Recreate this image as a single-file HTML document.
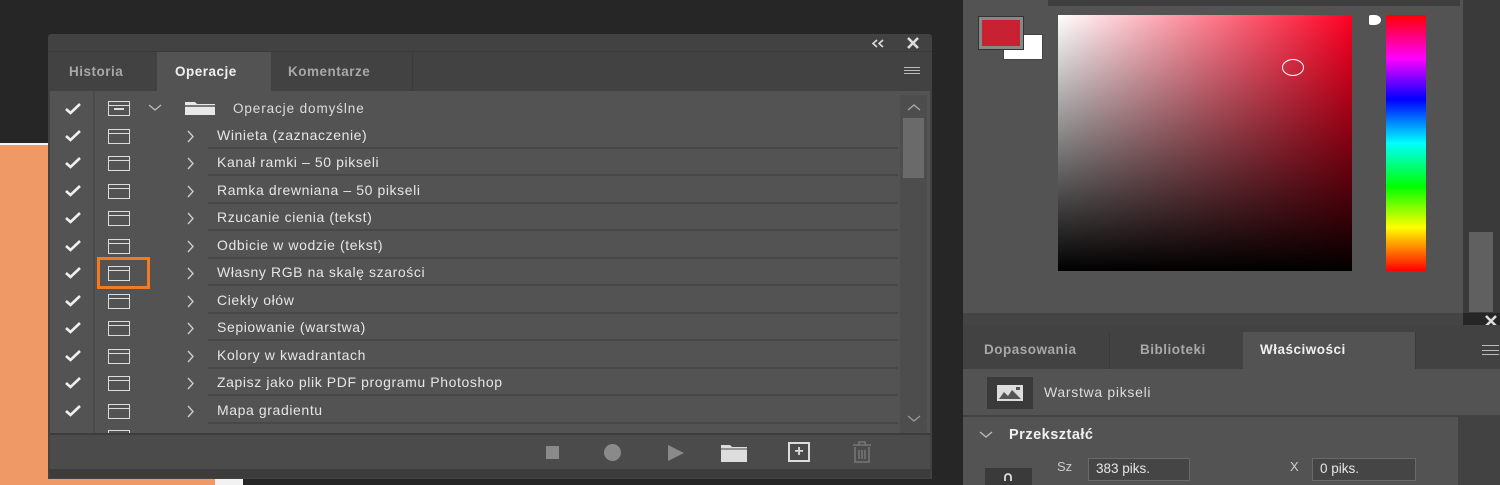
<!DOCTYPE html>
<html><head><meta charset="utf-8"><style>
*{margin:0;padding:0;box-sizing:border-box}
body{width:1500px;height:485px;overflow:hidden;background:#262626;position:relative;font-family:"Liberation Sans",sans-serif}
.a{position:absolute}
.row{position:absolute;left:50px;width:848px;height:27px}
.row .ck{position:absolute;left:14px;top:7px}
.row .ic{position:absolute;left:58px;top:7px;width:22px;height:15px;border:1.5px solid #ddd}
.row .ic:after{content:"";position:absolute;left:0;right:0;top:3px;border-top:1.5px solid #ddd}
.row .cv{position:absolute;left:137px;top:8px}
.row .tx{position:absolute;left:167px;top:5px;color:#e6e6e6;font-size:14px;letter-spacing:.6px;white-space:nowrap}
.row .ln{position:absolute;left:158px;right:0;bottom:0;border-top:2px solid #474747}
.tab{position:absolute;font-size:13.5px;font-weight:bold;color:#a8a8a8;letter-spacing:.5px}
</style></head><body>
<div class="a" style="left:0;top:143px;width:48px;height:2px;background:#f4f4f4"></div>
<div class="a" style="left:0;top:145px;width:215px;height:340px;background:#ef9a66"></div>
<div class="a" style="left:215px;top:479px;width:28px;height:6px;background:#f2f2f2"></div>

<div class="a" style="left:48px;top:34px;width:884px;height:445px;background:#424242;border-radius:3px 3px 0 0"></div>
<div class="a" style="left:48px;top:51px;width:884px;height:1px;background:#3a3a3a"></div>
<svg class="a" style="left:871px;top:39px" width="14" height="9"><path d="M6 1 L2 4.5 L6 8 M12 1 L8 4.5 L12 8" stroke="#ddd" stroke-width="1.6" fill="none"/></svg>
<svg class="a" style="left:906px;top:37px" width="14" height="12"><path d="M2 1 L12 11 M12 1 L2 11" stroke="#ddd" stroke-width="2.6"/></svg>
<div class="a" style="left:157px;top:52px;width:114px;height:40px;background:#535353"></div>
<div class="a" style="left:412px;top:52px;width:1px;height:39px;background:#3a3a3a"></div>
<div class="tab" style="left:69px;top:64px">Historia</div>
<div class="tab" style="left:175px;top:64px;color:#f0f0f0">Operacje</div>
<div class="tab" style="left:288px;top:64px">Komentarze</div>
<div class="a" style="left:904px;top:67px;width:16px;height:7px;border-top:1px solid #bbb;border-bottom:1px solid #bbb"></div>
<div class="a" style="left:904px;top:70px;width:16px;height:1px;background:#bbb"></div>
<div class="a" style="left:50px;top:91px;width:880px;height:342px;background:#535353"></div>
<div class="a" style="left:93px;top:91px;width:2px;height:342px;background:#4a4a4a"></div>
<div class="a" style="left:900px;top:95px;width:27px;height:338px;background:#4d4d4d"></div>
<svg class="a" style="left:907px;top:103px" width="14" height="8"><path d="M1 7 L7 2 L13 7" stroke="#aaa" stroke-width="1.3" fill="none"/></svg>
<div class="a" style="left:903px;top:118px;width:21px;height:60px;background:#6a6a6a"></div>
<svg class="a" style="left:907px;top:415px" width="14" height="8"><path d="M1 1 L7 6 L13 1" stroke="#999" stroke-width="1.3" fill="none"/></svg>

<div class="row" style="top:95px">
<svg class="ck" width="18" height="13"><path d="M2 7 L6.5 11 L16 2" stroke="#f0f0f0" stroke-width="2.6" fill="none"/></svg>
<div class="ic" style="top:6px"></div><div class="a" style="left:64px;top:13px;width:10px;height:1.5px;background:#ddd"></div>
<svg class="a" style="left:98px;top:9px" width="14" height="8"><path d="M1 1 L7 6 L13 1" stroke="#bbb" stroke-width="1.3" fill="none"/></svg>
<svg class="a" style="left:134px;top:5px" width="32" height="16"><path d="M1 2 H11 L13 4 H31 V15 H1 Z" fill="#e8e8e8"/><path d="M1 6 H31" stroke="#535353" stroke-width="1.5"/></svg>
<div class="tx" style="left:183px;top:6px;color:#ddd;font-size:13.5px;letter-spacing:.9px">Operacje domyślne</div>
</div>

<div class="row" style="top:122px"><svg class="ck" width="18" height="13"><path d="M2 7 L6.5 11 L16 2" stroke="#f0f0f0" stroke-width="2.6" fill="none"/></svg><div class="ic"></div><svg class="cv" width="8" height="13"><path d="M1 1 L6 6.5 L1 12" stroke="#ccc" stroke-width="1.4" fill="none"/></svg><div class="tx">Winieta (zaznaczenie)</div><div class="ln"></div></div>
<div class="row" style="top:149px"><svg class="ck" width="18" height="13"><path d="M2 7 L6.5 11 L16 2" stroke="#f0f0f0" stroke-width="2.6" fill="none"/></svg><div class="ic"></div><svg class="cv" width="8" height="13"><path d="M1 1 L6 6.5 L1 12" stroke="#ccc" stroke-width="1.4" fill="none"/></svg><div class="tx">Kanał ramki – 50 pikseli</div><div class="ln"></div></div>
<div class="row" style="top:177px"><svg class="ck" width="18" height="13"><path d="M2 7 L6.5 11 L16 2" stroke="#f0f0f0" stroke-width="2.6" fill="none"/></svg><div class="ic"></div><svg class="cv" width="8" height="13"><path d="M1 1 L6 6.5 L1 12" stroke="#ccc" stroke-width="1.4" fill="none"/></svg><div class="tx">Ramka drewniana – 50 pikseli</div><div class="ln"></div></div>
<div class="row" style="top:204px"><svg class="ck" width="18" height="13"><path d="M2 7 L6.5 11 L16 2" stroke="#f0f0f0" stroke-width="2.6" fill="none"/></svg><div class="ic"></div><svg class="cv" width="8" height="13"><path d="M1 1 L6 6.5 L1 12" stroke="#ccc" stroke-width="1.4" fill="none"/></svg><div class="tx">Rzucanie cienia (tekst)</div><div class="ln"></div></div>
<div class="row" style="top:232px"><svg class="ck" width="18" height="13"><path d="M2 7 L6.5 11 L16 2" stroke="#f0f0f0" stroke-width="2.6" fill="none"/></svg><div class="ic"></div><svg class="cv" width="8" height="13"><path d="M1 1 L6 6.5 L1 12" stroke="#ccc" stroke-width="1.4" fill="none"/></svg><div class="tx">Odbicie w wodzie (tekst)</div><div class="ln"></div></div>
<div class="row" style="top:259px"><svg class="ck" width="18" height="13"><path d="M2 7 L6.5 11 L16 2" stroke="#f0f0f0" stroke-width="2.6" fill="none"/></svg><div class="ic"></div><svg class="cv" width="8" height="13"><path d="M1 1 L6 6.5 L1 12" stroke="#ccc" stroke-width="1.4" fill="none"/></svg><div class="tx">Własny RGB na skalę szarości</div><div class="ln"></div></div>
<div class="row" style="top:287px"><svg class="ck" width="18" height="13"><path d="M2 7 L6.5 11 L16 2" stroke="#f0f0f0" stroke-width="2.6" fill="none"/></svg><div class="ic"></div><svg class="cv" width="8" height="13"><path d="M1 1 L6 6.5 L1 12" stroke="#ccc" stroke-width="1.4" fill="none"/></svg><div class="tx">Ciekły ołów</div><div class="ln"></div></div>
<div class="row" style="top:314px"><svg class="ck" width="18" height="13"><path d="M2 7 L6.5 11 L16 2" stroke="#f0f0f0" stroke-width="2.6" fill="none"/></svg><div class="ic"></div><svg class="cv" width="8" height="13"><path d="M1 1 L6 6.5 L1 12" stroke="#ccc" stroke-width="1.4" fill="none"/></svg><div class="tx">Sepiowanie (warstwa)</div><div class="ln"></div></div>
<div class="row" style="top:342px"><svg class="ck" width="18" height="13"><path d="M2 7 L6.5 11 L16 2" stroke="#f0f0f0" stroke-width="2.6" fill="none"/></svg><div class="ic"></div><svg class="cv" width="8" height="13"><path d="M1 1 L6 6.5 L1 12" stroke="#ccc" stroke-width="1.4" fill="none"/></svg><div class="tx">Kolory w kwadrantach</div><div class="ln"></div></div>
<div class="row" style="top:369px"><svg class="ck" width="18" height="13"><path d="M2 7 L6.5 11 L16 2" stroke="#f0f0f0" stroke-width="2.6" fill="none"/></svg><div class="ic"></div><svg class="cv" width="8" height="13"><path d="M1 1 L6 6.5 L1 12" stroke="#ccc" stroke-width="1.4" fill="none"/></svg><div class="tx">Zapisz jako plik PDF programu Photoshop</div><div class="ln"></div></div>
<div class="row" style="top:397px"><svg class="ck" width="18" height="13"><path d="M2 7 L6.5 11 L16 2" stroke="#f0f0f0" stroke-width="2.6" fill="none"/></svg><div class="ic"></div><svg class="cv" width="8" height="13"><path d="M1 1 L6 6.5 L1 12" stroke="#ccc" stroke-width="1.4" fill="none"/></svg><div class="tx">Mapa gradientu</div><div class="ln"></div></div>
<div class="row" style="top:424px;height:9px;overflow:hidden"><div class="ic" style="top:6px"></div></div>
<div class="a" style="left:97px;top:257px;width:53px;height:32px;border:3px solid #f27a22"></div>

<div class="a" style="left:50px;top:433px;width:880px;height:36px;background:#4b4b4b;border-top:2px solid #3c3c3c"></div>
<div class="a" style="left:546px;top:446px;width:13px;height:13px;background:#8a8a8a"></div>
<div class="a" style="left:604px;top:444px;width:17px;height:17px;border-radius:50%;background:#8a8a8a"></div>
<svg class="a" style="left:666px;top:444px" width="20" height="18"><path d="M2 1 L18 9 L2 17Z" fill="#8a8a8a"/></svg>
<svg class="a" style="left:720px;top:443px" width="28" height="20"><path d="M1 2 H10 L12 4 H27 V19 H1Z" fill="#ddd"/><path d="M1 6 H27" stroke="#4b4b4b" stroke-width="1"/></svg>
<div class="a" style="left:788px;top:442px;width:22px;height:20px;border:2px solid #ddd;color:#ddd;font-size:16px;line-height:15px;text-align:center;font-weight:bold">+</div>
<svg class="a" style="left:850px;top:441px" width="24" height="22"><path d="M3 4 H21 M9 4 V1 H15 V4 M5 6 V21 H19 V6 M9 9 V18 M12 9 V18 M15 9 V18" stroke="#777" stroke-width="1.5" fill="none"/></svg>
<div class="a" style="left:50px;top:469px;width:880px;height:9px;background:#3c3c3c"></div>

<div class="a" style="left:963px;top:0;width:500px;height:313px;background:#535353"></div>
<div class="a" style="left:1048px;top:0;width:412px;height:6px;background:#3e3e3e"></div>
<div class="a" style="left:1463px;top:0;width:37px;height:313px;background:#3a3a3a"></div>
<div class="a" style="left:1469px;top:232px;width:24px;height:80px;background:#606060"></div>
<div class="a" style="left:1003px;top:34px;width:40px;height:26px;background:#fff;border:1px solid #444"></div>
<div class="a" style="left:979px;top:17px;width:44px;height:32px;background:#c82232;border:3px solid #888;outline:1px solid #333"></div>
<div class="a" style="left:1058px;top:15px;width:294px;height:256px;background:linear-gradient(to bottom,rgba(0,0,0,0),#000),linear-gradient(to right,#fff,#ff0022)"></div>
<div class="a" style="left:1282px;top:59px;width:22px;height:17px;border:1.5px solid #fff;border-radius:50%"></div>
<div class="a" style="left:1386px;top:15px;width:40px;height:256px;background:linear-gradient(to bottom,#f00,#f0f 17%,#00f 33%,#0ff 50%,#0f0 67%,#ff0 83%,#f00)"></div>
<div class="a" style="left:1369px;top:15px;width:12px;height:10px;background:#fff;border-radius:2px 50% 50% 2px"></div>
<div class="a" style="left:963px;top:313px;width:500px;height:12px;background:#444"></div>
<svg class="a" style="left:1484px;top:315px" width="14" height="12"><path d="M2 1 L12 11 M12 1 L2 11" stroke="#ddd" stroke-width="2.6"/></svg>
<div class="a" style="left:963px;top:325px;width:537px;height:160px;background:#424242"></div>
<div class="a" style="left:1243px;top:332px;width:172px;height:38px;background:#535353"></div>
<div class="a" style="left:1109px;top:332px;width:1px;height:37px;background:#3a3a3a"></div>
<div class="a" style="left:1415px;top:332px;width:1px;height:37px;background:#3a3a3a"></div>
<div class="tab" style="left:984px;top:342px">Dopasowania</div>
<div class="tab" style="left:1140px;top:342px">Biblioteki</div>
<div class="tab" style="left:1260px;top:342px;color:#f0f0f0">Właściwości</div>
<div class="a" style="left:1482px;top:345px;width:17px;height:10px;border-top:1px solid #bbb;border-bottom:1px solid #bbb"></div>
<div class="a" style="left:1482px;top:350px;width:17px;height:1px;background:#bbb"></div>
<div class="a" style="left:963px;top:369px;width:537px;height:46px;background:#535353"></div>
<div class="a" style="left:987px;top:377px;width:46px;height:32px;background:#3a3a3a"></div>
<svg class="a" style="left:996px;top:384px" width="28" height="18"><rect x="1" y="1" width="26" height="16" fill="#ddd"/><path d="M3 15 L8 8 L12 12 L16 6 L25 15Z" fill="#555"/><rect x="20" y="3" width="4" height="3" fill="#555"/></svg>
<div class="a" style="left:1044px;top:384px;color:#ddd;font-size:14px;letter-spacing:.7px">Warstwa pikseli</div>
<div class="a" style="left:963px;top:417px;width:495px;height:68px;background:#535353"></div>
<svg class="a" style="left:979px;top:431px" width="14" height="8"><path d="M1 1 L7 6 L13 1" stroke="#bbb" stroke-width="1.3" fill="none"/></svg>
<div class="a" style="left:1009px;top:427px;color:#f0f0f0;font-size:14.5px;font-weight:bold;letter-spacing:.5px">Przekształć</div>
<div class="a" style="left:1057px;top:459px;color:#ccc;font-size:13px">Sz</div>
<div class="a" style="left:1088px;top:458px;width:102px;height:23px;background:#454545;border:1px solid #6a6a6a;color:#e6e6e6;font-size:13.5px;padding:2px 7px">383 piks.</div>
<div class="a" style="left:1290px;top:459px;color:#ccc;font-size:13px">X</div>
<div class="a" style="left:1312px;top:458px;width:104px;height:23px;background:#454545;border:1px solid #6a6a6a;color:#e6e6e6;font-size:13.5px;padding:2px 7px">0 piks.</div>
<div class="a" style="left:985px;top:468px;width:47px;height:17px;background:#3a3a3a"></div>
<svg class="a" style="left:1002px;top:472px" width="12" height="13"><path d="M3 9 V5 A3 3 0 0 1 9 5 V9" stroke="#ddd" stroke-width="1.8" fill="none"/></svg>
</body></html>
